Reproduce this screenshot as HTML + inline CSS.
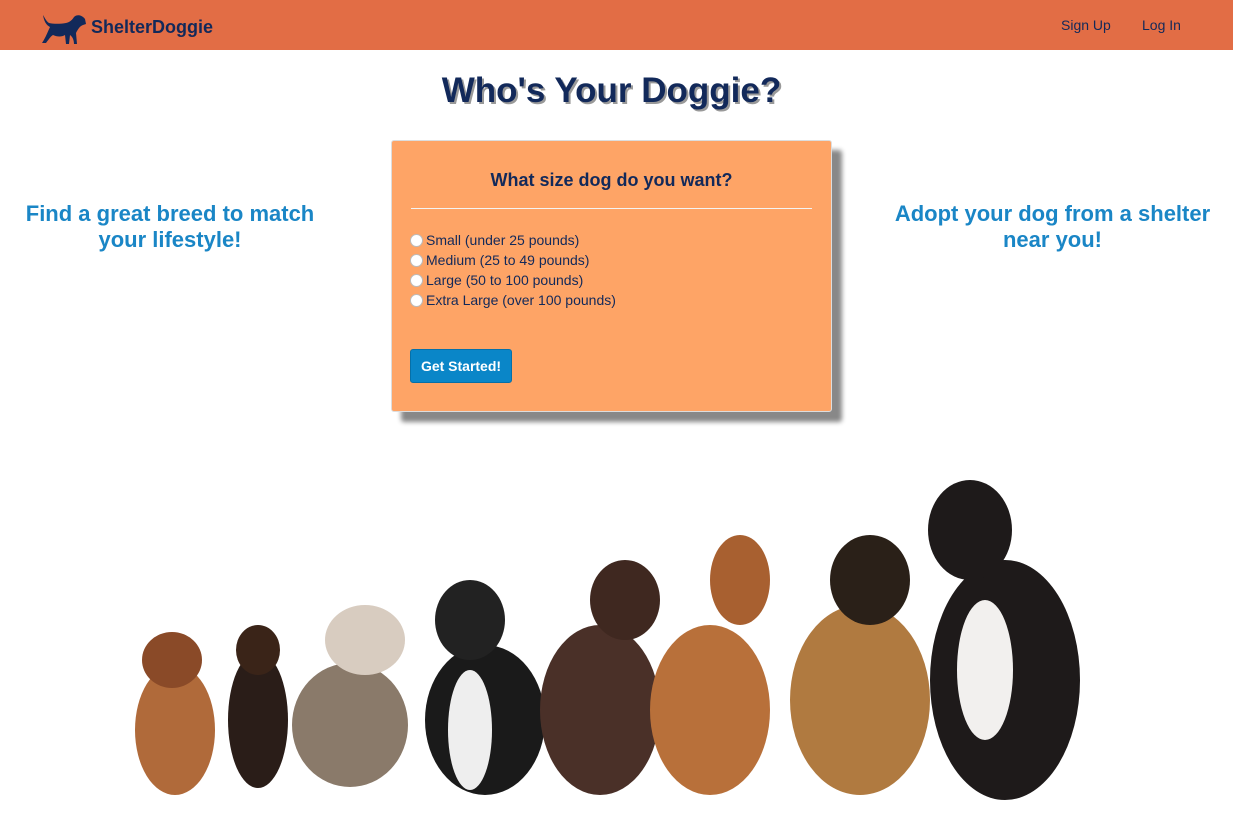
<!DOCTYPE html>
<html><head><meta charset="utf-8"><style>
*{margin:0;padding:0;box-sizing:border-box}
body{width:1233px;height:823px;background:#fff;font-family:"Liberation Sans",Arial,sans-serif;position:relative;overflow:hidden}
.nav{height:50px;background:#e26d45;position:relative}
.brand{position:absolute;left:91px;top:17px;font-weight:bold;font-size:18px;color:#12295a}
.nav a{position:absolute;top:17px;font-size:14px;color:#12295a;text-decoration:none}
h1{position:absolute;left:0;width:1223px;top:71px;text-align:center;font-size:35px;color:#12295a;text-shadow:2px 2px 0 #999}
.side{position:absolute;top:201px;font-size:22px;font-weight:bold;color:#1a86c6;text-align:center;line-height:26px}
.card{position:absolute;left:391px;top:140px;width:441px;height:272px;background:#fea466;border:1px solid #ddd;border-radius:3px;box-shadow:10px 10px 5px #888}
.card h3{position:absolute;top:29px;width:100%;text-align:center;font-size:18px;color:#12295a}
.card hr{position:absolute;left:19px;right:19px;top:67px;border:0;border-top:1px solid #f3f3f3}
.opt{position:absolute;left:18px;font-size:14px;color:#12295a;display:flex;align-items:center}
.opt i{width:13px;height:13px;border-radius:50%;background:#fff;border:1px solid #bbb;margin-right:3px}
.btn{position:absolute;left:18px;top:208px;width:102px;height:34px;background:#0a86c8;border:1px solid #0670a8;border-radius:3px;color:#fff;font-size:14px;font-weight:bold;text-align:center;line-height:32px}
</style></head><body>
<div class="nav">
<svg style="position:absolute;left:40px;top:13px" width="48" height="34" viewBox="0 0 48 34"><path d="M3 2 C4 8 6 12 10 14 C8 18 6 24 2 30 L6 30 C9 26 11 23 13 22 C17 24 22 24 25 22 L26 31 L29 31 L30 22 C33 24 34 28 34 31 L37 31 L36 20 C38 16 40 13 43 12 L46 11 L45 6 C42 2 37 1 34 4 C32 7 30 9 26 10 C20 11 14 11 9 10 C6 8 5 5 3 2Z" fill="#12295a"/></svg>
<div class="brand">ShelterDoggie</div>
<a style="left:1061px">Sign Up</a><a style="left:1142px">Log In</a>
</div>
<h1>Who's Your Doggie?</h1>
<div class="side" style="left:10px;width:320px">Find a great breed to match<br>your lifestyle!</div>
<div class="side" style="left:880px;width:345px">Adopt your dog from a shelter<br>near you!</div>
<div class="card">
<h3>What size dog do you want?</h3><hr>
<div class="opt" style="top:91px"><i></i>Small (under 25 pounds)</div>
<div class="opt" style="top:111px"><i></i>Medium (25 to 49 pounds)</div>
<div class="opt" style="top:131px"><i></i>Large (50 to 100 pounds)</div>
<div class="opt" style="top:151px"><i></i>Extra Large (over 100 pounds)</div>
<div class="btn">Get Started!</div>
</div>
<svg style="position:absolute;left:0;top:470px" width="1233" height="340">
<ellipse cx="175" cy="260" rx="40" ry="65" fill="#b06a3a"/><ellipse cx="172" cy="190" rx="30" ry="28" fill="#8a4a28"/>
<ellipse cx="258" cy="250" rx="30" ry="68" fill="#2a1d18"/><ellipse cx="258" cy="180" rx="22" ry="25" fill="#3a2418"/>
<ellipse cx="350" cy="255" rx="58" ry="62" fill="#8a7a6a"/><ellipse cx="365" cy="170" rx="40" ry="35" fill="#d8ccc0"/>
<ellipse cx="485" cy="250" rx="60" ry="75" fill="#1a1a1a"/><ellipse cx="470" cy="260" rx="22" ry="60" fill="#eee"/><ellipse cx="470" cy="150" rx="35" ry="40" fill="#222"/>
<ellipse cx="600" cy="240" rx="60" ry="85" fill="#4a3028"/><ellipse cx="625" cy="130" rx="35" ry="40" fill="#3f2820"/>
<ellipse cx="710" cy="240" rx="60" ry="85" fill="#b8703a"/><ellipse cx="740" cy="110" rx="30" ry="45" fill="#a86030"/>
<ellipse cx="860" cy="230" rx="70" ry="95" fill="#b07a40"/><ellipse cx="870" cy="110" rx="40" ry="45" fill="#2a2018"/>
<ellipse cx="1005" cy="210" rx="75" ry="120" fill="#1e1a1a"/><ellipse cx="985" cy="200" rx="28" ry="70" fill="#f2f0ee"/><ellipse cx="970" cy="60" rx="42" ry="50" fill="#1e1a1a"/>
</svg>
</body></html>
